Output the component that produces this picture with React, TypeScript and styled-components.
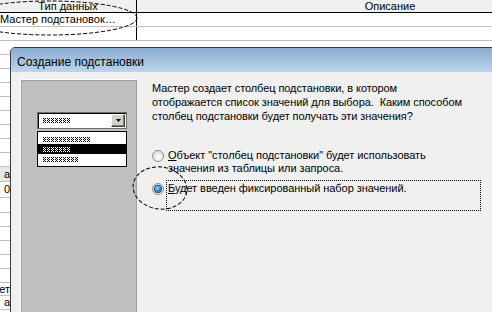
import React from "react";
import styled, { createGlobalStyle } from "styled-components";

const GlobalStyle = createGlobalStyle`
  html, body { margin: 0; padding: 0; }
  body { background: #fff; font-family: "Liberation Sans", Arial, sans-serif; color: #000; }
`;

const Screen = styled.div`
  position: relative;
  width: 492px;
  height: 312px;
  overflow: hidden;
  background: #fff;
`;

/* ---------- background table ---------- */
const Grid = styled.div`
  display: flex;
  flex-direction: column;
  width: 700px;
`;

const HeaderRow = styled.div`
  display: flex;
  height: 12px;
  background: #f0f0f0;
  border-bottom: 1px solid #000;
  font-size: 11px;
  line-height: 12px;
`;

const HeaderCell = styled.div<{ $w: number; $divider?: boolean }>`
  width: ${(p) => p.$w}px;
  flex: none;
  text-align: center;
  white-space: nowrap;
  border-right: ${(p) => (p.$divider ? "1px solid #000" : "none")};
`;

const Row = styled.div<{ $h: number; $shade?: boolean }>`
  display: flex;
  height: ${(p) => p.$h}px;
  line-height: ${(p) => p.$h}px;
  border-bottom: 1px solid #c0c0c0;
  background: ${(p) => (p.$shade ? "#e6e6e6" : "#fff")};
  font-size: 11px;
`;

const TypeCell = styled.div`
  width: 136px;
  flex: none;
  border-right: 1px solid #000;
  white-space: nowrap;
  overflow: hidden;
`;

const EdgeCell = styled.div`
  width: 10px;
  flex: none;
  display: flex;
  justify-content: flex-end;
  padding-right: 0;
  white-space: nowrap;
`;

/* ---------- dialog ---------- */
const Dialog = styled.div`
  position: absolute;
  left: 10px;
  top: 47px;
  width: 540px;
  height: 300px;
  border: 1px solid #3a3a3a;
  border-radius: 5px 5px 0 0;
  background: #f0f0f0;
  display: flex;
  flex-direction: column;
  overflow: hidden;
`;

const TitleBar = styled.div`
  height: 24px;
  flex: none;
  box-sizing: border-box;
  padding: 3px 0 0 6px;
  display: flex;
  align-items: center;
  background: linear-gradient(#8cadd1, #bcd4ec);
  font-size: 12px;
  color: #000;
`;

const Client = styled.div`
  display: flex;
  align-items: stretch;
  gap: 15px;
  padding: 8px 0 0 10px;
  flex: 1;
  min-height: 0;
`;

const SidePanel = styled.div`
  box-sizing: border-box;
  width: 116px;
  flex: none;
  background: #c0c0c0;
  border-top: 1px solid #a0a0a0;
  border-left: 1px solid #a0a0a0;
  border-right: 1px solid #a0a0a0;
  box-shadow: -1px -1px 0 #fff;
  padding: 31px 0 0 15px;
  display: flex;
  flex-direction: column;
  gap: 2px;
`;

const Combo = styled.div`
  box-sizing: border-box;
  width: 90px;
  height: 17px;
  border: 1px solid #6e6e6e;
  box-shadow: inset 1px 1px 0 #000;
  background: #fff;
  display: flex;
  align-items: center;
  justify-content: space-between;
  padding: 0 1px 0 5px;
`;

const DropButton = styled.div`
  box-sizing: border-box;
  width: 14px;
  height: 13px;
  background: #d4d0c8;
  border-top: 1px solid #fff;
  border-left: 1px solid #fff;
  border-right: 1px solid #404040;
  border-bottom: 1px solid #404040;
  box-shadow: inset -1px -1px 0 #808080;
  display: flex;
  align-items: center;
  justify-content: center;
`;

const ListBox = styled.div`
  box-sizing: border-box;
  width: 90px;
  border: 1px solid #000;
  background: #fff;
  padding: 2px 0;
  display: flex;
  flex-direction: column;
`;

const ListItem = styled.div<{ $selected?: boolean }>`
  height: 10px;
  display: flex;
  align-items: center;
  padding-left: 5px;
  background: ${(p) => (p.$selected ? "#000" : "transparent")};
`;

const PatternSvg = styled.svg`
  display: block;
  flex: none;
`;

const Content = styled.div`
  display: flex;
  flex-direction: column;
  padding-top: 1px;
  font-size: 11px;
  color: #000;
`;

const Paragraph = styled.p`
  margin: 0;
  line-height: 14px;
  white-space: nowrap;
  letter-spacing: -0.08px;
`;

const Options = styled.div`
  display: flex;
  flex-direction: column;
  gap: 3px;
  margin-top: 24px;
`;

const Option = styled.div`
  display: flex;
  align-items: flex-start;
  gap: 2px;
`;

const Radio = styled.div<{ $checked?: boolean }>`
  width: 10px;
  height: 10px;
  margin-top: 3px;
  flex: none;
  border-radius: 50%;
  border: 1px solid #8e8f8f;
  background: radial-gradient(circle at 60% 65%, #ffffff 0%, #f1f1f1 35%, #cfcfcf 100%);
  display: flex;
  align-items: center;
  justify-content: center;
  &::after {
    content: "";
    display: ${(p) => (p.$checked ? "block" : "none")};
    width: 6px;
    height: 6px;
    border-radius: 50%;
    background: radial-gradient(circle at 40% 35%, #a7e3ff 0%, #3d9be0 40%, #0d3f78 100%);
    box-shadow: 0 0 0 1px #2b3f55;
  }
`;

const OptionLabel = styled.div<{ $focused?: boolean; $h?: number }>`
  width: 311px;
  ${(p) => (p.$h ? `height: ${p.$h}px;` : "")}
  border: 1px ${(p) => (p.$focused ? "dotted #000" : "solid transparent")};
  padding: 1px 1px;
  line-height: 13px;
  white-space: nowrap;
  letter-spacing: -0.05px;
`;

const Overlay = styled.svg`
  position: absolute;
  left: 0;
  top: 0;
  pointer-events: none;
`;

/* pixel placeholder "text" used in the wizard illustration */
const FakeText: React.FC<{ n: number; color: string; id: string }> = ({ n, color, id }) => (
  <PatternSvg width={n * 4 - 1} height={5}>
    <defs>
      <pattern id={id} width="4" height="5" patternUnits="userSpaceOnUse">
        <rect x="0" y="0" width="1" height="1" fill={color} />
        <rect x="2" y="0" width="1" height="1" fill={color} />
        <rect x="1" y="1" width="1" height="1" fill={color} />
        <rect x="0" y="2" width="1" height="1" fill={color} />
        <rect x="2" y="2" width="1" height="1" fill={color} />
        <rect x="1" y="3" width="1" height="1" fill={color} />
        <rect x="0" y="4" width="1" height="1" fill={color} />
        <rect x="2" y="4" width="1" height="1" fill={color} />
      </pattern>
    </defs>
    <rect x="0" y="0" width={n * 4 - 1} height="5" fill={`url(#${id})`} />
  </PatternSvg>
);

const edgeRows: { h: number; shade?: boolean; text?: string }[] = [
  { h: 13 }, { h: 13 }, { h: 13 }, { h: 13 }, { h: 13 }, { h: 13 }, { h: 13 }, { h: 13 }, { h: 13 },
  { h: 14, shade: true, text: "а" },
  { h: 15, text: "0" },
  { h: 14 },
  { h: 13 }, { h: 13 }, { h: 13 }, { h: 13 }, { h: 13 },
  { h: 12, text: "ет" },
  { h: 13, text: "а" },
];

export default function App() {
  return (
    <>
      <GlobalStyle />
      <Screen>
        <Grid>
          <HeaderRow>
            <HeaderCell $w={136} $divider>Тип данных</HeaderCell>
            <HeaderCell $w={506}>Описание</HeaderCell>
          </HeaderRow>
          <Row $h={13}>
            <TypeCell>Мастер подстановок…</TypeCell>
          </Row>
          <Row $h={13}>
            <TypeCell />
          </Row>
          {edgeRows.map((r, i) => (
            <Row key={i} $h={r.h} $shade={r.shade}>
              <EdgeCell>{r.text ?? ""}</EdgeCell>
            </Row>
          ))}
        </Grid>

        <Dialog>
          <TitleBar>Создание подстановки</TitleBar>
          <Client>
            <SidePanel>
              <Combo>
                <FakeText n={7} color="#000" id="pt-combo" />
                <DropButton>
                  <svg width="5" height="3" viewBox="0 0 5 3">
                    <polygon points="0,0 5,0 2.5,3" fill="#000" />
                  </svg>
                </DropButton>
              </Combo>
              <ListBox>
                <ListItem>
                  <FakeText n={12} color="#000" id="pt-a" />
                </ListItem>
                <ListItem $selected>
                  <FakeText n={7} color="#fff" id="pt-b" />
                </ListItem>
                <ListItem>
                  <FakeText n={9} color="#000" id="pt-c" />
                </ListItem>
              </ListBox>
            </SidePanel>
            <Content>
              <Paragraph>
                Мастер создает столбец подстановки, в котором
                <br />
                отображается список значений для выбора.&nbsp; Каким способом
                <br />
                столбец подстановки будет получать эти значения?
              </Paragraph>
              <Options>
                <Option>
                  <Radio />
                  <OptionLabel>
                    <u>О</u>бъект "столбец подстановки" будет использовать
                    <br />
                    значения из таблицы или запроса.
                  </OptionLabel>
                </Option>
                <Option>
                  <Radio $checked />
                  <OptionLabel $focused $h={27}>
                    <u>Б</u>удет введен фиксированный набор значений.
                  </OptionLabel>
                </Option>
              </Options>
            </Content>
          </Client>
        </Dialog>

        <Overlay width={492} height={312} viewBox="0 0 492 312">
          <ellipse cx="50" cy="18" rx="87" ry="17" fill="none" stroke="#000" strokeWidth="1" strokeDasharray="4 2" />
          <ellipse cx="160" cy="188" rx="27" ry="21" fill="none" stroke="#000" strokeWidth="1" strokeDasharray="4 2" transform="rotate(8 160 188)" />
        </Overlay>
      </Screen>
    </>
  );
}
